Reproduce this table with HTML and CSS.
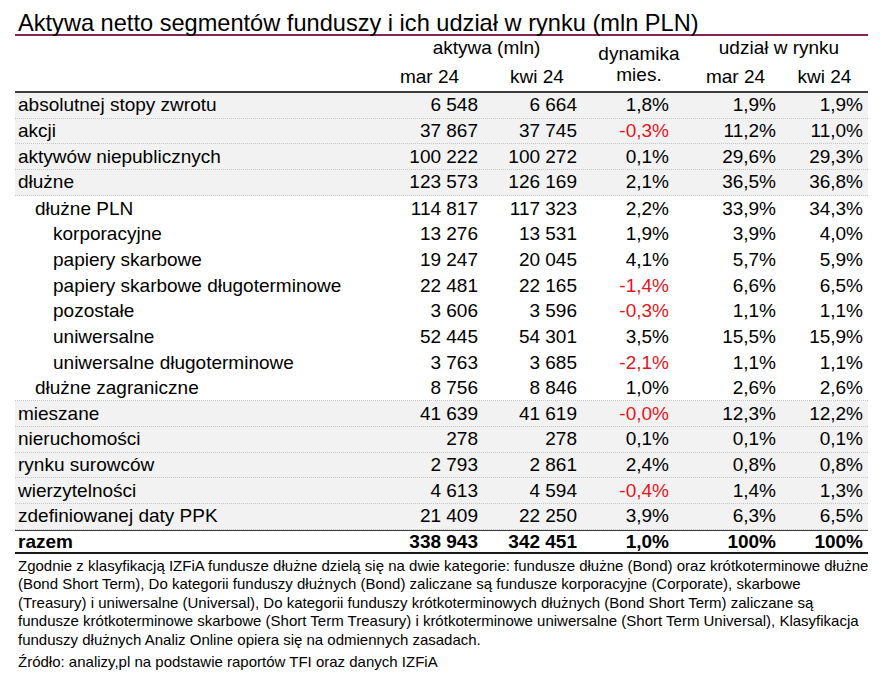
FILE: index.html
```html
<!DOCTYPE html>
<html lang="pl">
<head>
<meta charset="utf-8">
<title>Aktywa netto segmentów funduszy</title>
<link rel="stylesheet" href="styles.css">
</head>
<body>
<div class="page">
  <h1 class="title">Aktywa netto segmentów funduszy i ich udział w rynku (mln PLN)</h1>
  <div class="head">
    <div class="h-group h-aktywa">aktywa (mln)</div>
    <div class="h-dyn">dynamika<br>mies.</div>
    <div class="h-group h-udzial">udział w rynku</div>
    <div class="h-sub h-c1">mar 24</div>
    <div class="h-sub h-c2">kwi 24</div>
    <div class="h-sub h-c4">mar 24</div>
    <div class="h-sub h-c5">kwi 24</div>
  </div>
  <div class="body">
    <div class="row grey"><span class="lbl">absolutnej stopy zwrotu</span><span class="c1">6 548</span><span class="c2">6 664</span><span class="c3">1,8%</span><span class="c4">1,9%</span><span class="c5">1,9%</span></div>
    <div class="row grey"><span class="lbl">akcji</span><span class="c1">37 867</span><span class="c2">37 745</span><span class="c3 neg">-0,3%</span><span class="c4">11,2%</span><span class="c5">11,0%</span></div>
    <div class="row grey"><span class="lbl">aktywów niepublicznych</span><span class="c1">100 222</span><span class="c2">100 272</span><span class="c3">0,1%</span><span class="c4">29,6%</span><span class="c5">29,3%</span></div>
    <div class="row grey"><span class="lbl">dłużne</span><span class="c1">123 573</span><span class="c2">126 169</span><span class="c3">2,1%</span><span class="c4">36,5%</span><span class="c5">36,8%</span></div>
    <div class="row sub"><span class="lbl l1">dłużne PLN</span><span class="c1">114 817</span><span class="c2">117 323</span><span class="c3">2,2%</span><span class="c4">33,9%</span><span class="c5">34,3%</span></div>
    <div class="row sub"><span class="lbl l2">korporacyjne</span><span class="c1">13 276</span><span class="c2">13 531</span><span class="c3">1,9%</span><span class="c4">3,9%</span><span class="c5">4,0%</span></div>
    <div class="row sub"><span class="lbl l2">papiery skarbowe</span><span class="c1">19 247</span><span class="c2">20 045</span><span class="c3">4,1%</span><span class="c4">5,7%</span><span class="c5">5,9%</span></div>
    <div class="row sub"><span class="lbl l2">papiery skarbowe długoterminowe</span><span class="c1">22 481</span><span class="c2">22 165</span><span class="c3 neg">-1,4%</span><span class="c4">6,6%</span><span class="c5">6,5%</span></div>
    <div class="row sub"><span class="lbl l2">pozostałe</span><span class="c1">3 606</span><span class="c2">3 596</span><span class="c3 neg">-0,3%</span><span class="c4">1,1%</span><span class="c5">1,1%</span></div>
    <div class="row sub"><span class="lbl l2">uniwersalne</span><span class="c1">52 445</span><span class="c2">54 301</span><span class="c3">3,5%</span><span class="c4">15,5%</span><span class="c5">15,9%</span></div>
    <div class="row sub"><span class="lbl l2">uniwersalne długoterminowe</span><span class="c1">3 763</span><span class="c2">3 685</span><span class="c3 neg">-2,1%</span><span class="c4">1,1%</span><span class="c5">1,1%</span></div>
    <div class="row sub last"><span class="lbl l1">dłużne zagraniczne</span><span class="c1">8 756</span><span class="c2">8 846</span><span class="c3">1,0%</span><span class="c4">2,6%</span><span class="c5">2,6%</span></div>
    <div class="row grey"><span class="lbl">mieszane</span><span class="c1">41 639</span><span class="c2">41 619</span><span class="c3 neg">-0,0%</span><span class="c4">12,3%</span><span class="c5">12,2%</span></div>
    <div class="row grey"><span class="lbl">nieruchomości</span><span class="c1">278</span><span class="c2">278</span><span class="c3">0,1%</span><span class="c4">0,1%</span><span class="c5">0,1%</span></div>
    <div class="row grey"><span class="lbl">rynku surowców</span><span class="c1">2 793</span><span class="c2">2 861</span><span class="c3">2,4%</span><span class="c4">0,8%</span><span class="c5">0,8%</span></div>
    <div class="row grey"><span class="lbl">wierzytelności</span><span class="c1">4 613</span><span class="c2">4 594</span><span class="c3 neg">-0,4%</span><span class="c4">1,4%</span><span class="c5">1,3%</span></div>
    <div class="row grey"><span class="lbl">zdefiniowanej daty PPK</span><span class="c1">21 409</span><span class="c2">22 250</span><span class="c3">3,9%</span><span class="c4">6,3%</span><span class="c5">6,5%</span></div>
    <div class="row total"><span class="lbl">razem</span><span class="c1">338 943</span><span class="c2">342 451</span><span class="c3">1,0%</span><span class="c4">100%</span><span class="c5">100%</span></div>
  </div>
  <div class="notes">
    <p class="note">Zgodnie z klasyfikacją IZFiA fundusze dłużne dzielą się na dwie kategorie: fundusze dłużne (Bond) oraz krótkoterminowe dłużne<br>(Bond Short Term), Do kategorii funduszy dłużnych (Bond) zaliczane są fundusze korporacyjne (Corporate), skarbowe<br>(Treasury) i uniwersalne (Universal), Do kategorii funduszy krótkoterminowych dłużnych (Bond Short Term) zaliczane są<br>fundusze krótkoterminowe skarbowe (Short Term Treasury) i krótkoterminowe uniwersalne (Short Term Universal), Klasyfikacja<br>funduszy dłużnych Analiz Online opiera się na odmiennych zasadach.</p>
    <p class="source">Źródło: analizy,pl na podstawie raportów TFI oraz danych IZFiA</p>
  </div>
</div>
</body>
</html>
```

FILE: styles.css
```css
* { box-sizing: border-box; }
html, body { margin: 0; padding: 0; background: #fff; }
body {
  font-family: "Liberation Sans", Arial, sans-serif;
  color: #000;
}
.page {
  width: 888px;
  padding: 0 20px 0 15px;
}
.title {
  margin: 0;
  padding: 12px 0 0 3px;
  font-size: 23.6px;
  font-weight: normal;
  line-height: 23px;
  height: 36px;
  border-bottom: 2px solid #85245a;
  white-space: nowrap;
}
.head, .row {
  display: grid;
  grid-template-columns: 360px 111px 102px 102px 91px 87px;
  font-size: 19px;
}
.head {
  grid-template-rows: 27px 28px;
  border-bottom: 2px solid #3c3c3c;
  line-height: 22px;
}
.h-group { grid-row: 1; text-align: center; white-space: nowrap; padding-top: 1px; }
.h-aktywa { grid-column: 2 / 4; padding-left: 10px; }
.h-udzial { grid-column: 5 / 7; }
.h-dyn {
  grid-column: 4;
  grid-row: 1 / 3;
  text-align: center;
  line-height: 21px;
  align-self: center;
}
.h-sub { grid-row: 2; text-align: center; align-self: center; }
.h-c1 { grid-column: 2; padding-right: 2px; }
.h-c2 { grid-column: 3; }
.h-c4 { grid-column: 5; }
.h-c5 { grid-column: 6; }

.row {
  height: 25.7px;
  align-items: center;
  line-height: 22px;
  white-space: nowrap;
}
.row.grey {
  background: #f2f2f2;
  border-bottom: 1px dotted #c4c4c4;
}
.row.sub { background: #fff; }
.row.sub.last { border-bottom: 1px dotted #c4c4c4; }
.lbl { padding-left: 3px; }
.lbl.l1 { padding-left: 20px; }
.lbl.l2 { padding-left: 38px; }
.c1, .c2, .c3, .c4, .c5 { text-align: right; }
.c1 { padding-right: 8px; }
.c2 { padding-right: 11px; }
.c3 { padding-right: 21px; }
.c4 { padding-right: 5px; }
.c5 { padding-right: 5px; }
.neg { color: #e8141b; }

.row.total {
  height: 24px;
  font-weight: bold;
  background: #fff;
  border-top: 1px solid #3c3c3c;
  border-bottom: 2px solid #1a1a1a;
}

.notes {
  padding: 3px 0 0 3px;
  font-size: 15px;
  line-height: 18.6px;
}
.note { margin: 0; white-space: nowrap; }
.source { margin: 3px 0 0; }
```
